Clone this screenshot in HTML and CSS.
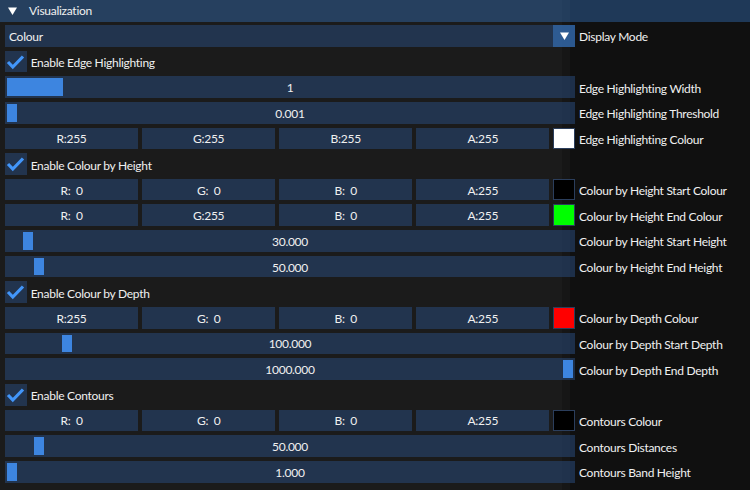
FILE: index.html
```html
<!DOCTYPE html>
<html>
<head>
<meta charset="utf-8">
<link rel="stylesheet" href="styles.css">
</head>
<body>
<div class="panel">
  <div class="header">
    <svg class="tri" width="9" height="8" viewBox="0 0 9 8"><polygon points="0,0.5 9,0.5 4.5,8" fill="#fff"/></svg>
    <span>Visualization</span>
  </div>
  <div class="rows">
    <div class="row">
      <div class="w combo"><span class="combo-text">Colour</span><span class="combo-btn"><svg width="9" height="8" viewBox="0 0 9 8"><polygon points="0,0.5 9,0.5 4.5,8" fill="#fff"/></svg></span></div>
      <div class="label">Display Mode</div>
    </div>
    <div class="row">
      <div class="check"><svg width="22" height="22" viewBox="0 0 22 22"><polyline points="3,11 7.8,16 18,5.5" fill="none" stroke="#4296fa" stroke-width="3.2"/></svg></div>
      <div class="check-label">Enable Edge Highlighting</div>
    </div>
    <div class="row">
      <div class="w slider"><span class="grab" style="left:2px;width:56px"></span><span class="val">1</span></div>
      <div class="label">Edge Highlighting Width</div>
    </div>
    <div class="row">
      <div class="w slider"><span class="grab" style="left:2px;width:10px"></span><span class="val">0.001</span></div>
      <div class="label">Edge Highlighting Threshold</div>
    </div>
    <div class="row">
      <div class="w colour"><span class="cbtn">R:255</span><span class="cbtn">G:255</span><span class="cbtn">B:255</span><span class="cbtn">A:255</span><span class="swatch sw-white"></span></div>
      <div class="label">Edge Highlighting Colour</div>
    </div>
    <div class="row">
      <div class="check"><svg width="22" height="22" viewBox="0 0 22 22"><polyline points="3,11 7.8,16 18,5.5" fill="none" stroke="#4296fa" stroke-width="3.2"/></svg></div>
      <div class="check-label">Enable Colour by Height</div>
    </div>
    <div class="row">
      <div class="w colour"><span class="cbtn">R:  0</span><span class="cbtn">G:  0</span><span class="cbtn">B:  0</span><span class="cbtn">A:255</span><span class="swatch sw-black"></span></div>
      <div class="label">Colour by Height Start Colour</div>
    </div>
    <div class="row">
      <div class="w colour"><span class="cbtn">R:  0</span><span class="cbtn">G:255</span><span class="cbtn">B:  0</span><span class="cbtn">A:255</span><span class="swatch sw-green"></span></div>
      <div class="label">Colour by Height End Colour</div>
    </div>
    <div class="row">
      <div class="w slider"><span class="grab" style="left:18px;width:10px"></span><span class="val">30.000</span></div>
      <div class="label">Colour by Height Start Height</div>
    </div>
    <div class="row">
      <div class="w slider"><span class="grab" style="left:29px;width:10px"></span><span class="val">50.000</span></div>
      <div class="label">Colour by Height End Height</div>
    </div>
    <div class="row">
      <div class="check"><svg width="22" height="22" viewBox="0 0 22 22"><polyline points="3,11 7.8,16 18,5.5" fill="none" stroke="#4296fa" stroke-width="3.2"/></svg></div>
      <div class="check-label">Enable Colour by Depth</div>
    </div>
    <div class="row">
      <div class="w colour"><span class="cbtn">R:255</span><span class="cbtn">G:  0</span><span class="cbtn">B:  0</span><span class="cbtn">A:255</span><span class="swatch sw-red"></span></div>
      <div class="label">Colour by Depth Colour</div>
    </div>
    <div class="row">
      <div class="w slider"><span class="grab" style="left:57px;width:10px"></span><span class="val">100.000</span></div>
      <div class="label">Colour by Depth Start Depth</div>
    </div>
    <div class="row">
      <div class="w slider"><span class="grab" style="left:558px;width:10px"></span><span class="val">1000.000</span></div>
      <div class="label">Colour by Depth End Depth</div>
    </div>
    <div class="row">
      <div class="check"><svg width="22" height="22" viewBox="0 0 22 22"><polyline points="3,11 7.8,16 18,5.5" fill="none" stroke="#4296fa" stroke-width="3.2"/></svg></div>
      <div class="check-label">Enable Contours</div>
    </div>
    <div class="row">
      <div class="w colour"><span class="cbtn">R:  0</span><span class="cbtn">G:  0</span><span class="cbtn">B:  0</span><span class="cbtn">A:255</span><span class="swatch sw-black"></span></div>
      <div class="label">Contours Colour</div>
    </div>
    <div class="row">
      <div class="w slider"><span class="grab" style="left:29px;width:10px"></span><span class="val">50.000</span></div>
      <div class="label">Contours Distances</div>
    </div>
    <div class="row">
      <div class="w slider"><span class="grab" style="left:2px;width:10px"></span><span class="val">1.000</span></div>
      <div class="label">Contours Band Height</div>
    </div>
  </div>
</div>
</body>
</html>
```
FILE: styles.css
```css
html, body {
  margin: 0;
  padding: 0;
  width: 750px;
  height: 490px;
  overflow: hidden;
}
body {
  background: linear-gradient(to right, #1b1b1b 0, #1b1b1b 562px, #161616 562px, #161616 570px, #101010 570px);
  font-family: Lato, "Liberation Sans", sans-serif;
  font-size: 12px;
  letter-spacing: -0.28px;
  color: #f0f0f0;
}
.panel {
  display: flex;
  flex-direction: column;
}
.header {
  height: 21.65px;
  background: rgba(66, 150, 250, 0.31);
  display: flex;
  align-items: center;
  margin-bottom: 3.35px;
}
.header .tri {
  margin-left: 8px;
  margin-right: 12px;
}
.rows {
  display: flex;
  flex-direction: column;
  gap: 4px;
  padding-left: 5px;
}
.row {
  display: flex;
  align-items: center;
  height: 21.65px;
  padding-top: 1px;
  box-sizing: border-box;
}
.row > * {
  margin-top: -1px;
}
.w {
  width: 570px;
  height: 21.65px;
  flex: none;
  margin-right: 4px;
  position: relative;
}
.label {
  white-space: nowrap;
  padding-top: 2px;
}
.combo {
  display: flex;
  align-items: center;
  background: rgba(41, 74, 122, 0.54);
}
.combo-text {
  flex: 1;
  padding-left: 4px;
  padding-top: 1px;
}
.combo-btn {
  width: 21.65px;
  height: 21.65px;
  background: rgba(66, 150, 250, 0.40);
  display: flex;
  align-items: center;
  justify-content: center;
}
.check {
  width: 21.65px;
  height: 21.65px;
  background: rgba(41, 74, 122, 0.54);
  flex: none;
}
.check svg {
  display: block;
}
.check-label {
  margin-left: 4px;
  padding-top: 2px;
}
.slider {
  background: rgba(41, 74, 122, 0.54);
  display: flex;
  align-items: center;
  justify-content: center;
}
.grab {
  position: absolute;
  top: 2px;
  bottom: 2px;
  background: #3d85e0;
}
.val {
  position: relative;
  padding-top: 1px;
}
.colour {
  display: flex;
  gap: 4px;
}
.cbtn {
  flex: 1;
  background: rgba(41, 74, 122, 0.54);
  display: flex;
  align-items: center;
  justify-content: center;
  white-space: pre;
  padding-top: 1px;
}
.swatch {
  width: 21.65px;
  height: 21.65px;
  flex: none;
  box-sizing: border-box;
  border: 1px solid #2b3e5c;
}
.sw-white { background: #ffffff; }
.sw-black { background: #000000; }
.sw-green { background: #00ff00; }
.sw-red { background: #ff0000; }
```
